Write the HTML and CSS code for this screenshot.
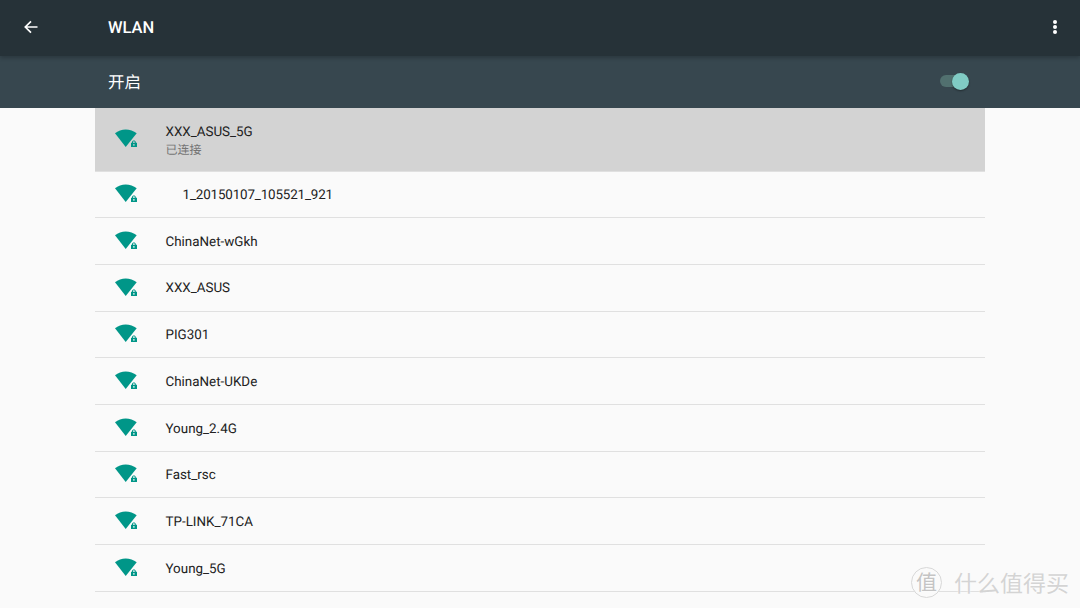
FILE: index.html
```html
<!DOCTYPE html>
<html lang="zh-CN">
<head>
    <meta charset="UTF-8" />
    <title>WLAN</title>
    <link rel="stylesheet" href="styles.css">
</head>
<body>
<svg class="defs" width="0" height="0">
    <symbol id="wifi" viewBox="0 0 24 20">
        <path d="M1 4.300C4 2 7.800 0.500 11.700 0.500C15.600 0.500 19.700 2 22.700 4.300L11.700 18.100Z" fill="#009688" />
        <path d="M18 13.700V13C18 12 18.900 11.400 19.900 11.400C20.900 11.400 21.800 12 21.800 13V13.700H23V18.100H17V13.700ZM19 13.700H20.800V13C20.800 12.500 20.400 12.200 19.900 12.200C19.400 12.200 19 12.500 19 13ZM19.900 15.100A0.800 0.800 0 1 0 19.910 16.700A0.800 0.800 0 1 0 19.900 15.100Z" fill="#009688" fill-rule="evenodd" />
    </symbol>
</svg>

<header class="toolbar">
    <svg class="back" width="16" height="16" viewBox="0 0 16 16">
        <path d="M14.500 8H2.500M8 2.300L2.300 8L8 13.700" fill="none" stroke="#fff" stroke-width="1.700" />
    </svg>
    <div class="title">WLAN</div>
    <div class="more"><span></span><span></span><span></span></div>
</header>

<div class="switch-bar">
    <div class="switch-label">开启</div>
    <div class="switch">
        <div class="track"></div>
        <div class="thumb"></div>
    </div>
</div>

<ul class="wifi-list">
    <li class="active">
        <svg class="wifi-icon"><use href="#wifi" /></svg>
        <div>
            <div class="name">XXX_ASUS_5G</div>
            <div class="status">已连接</div>
        </div>
    </li>
    <li><svg class="wifi-icon"><use href="#wifi" /></svg><div class="name indent">1_20150107_105521_921</div></li>
    <li><svg class="wifi-icon"><use href="#wifi" /></svg><div class="name">ChinaNet-wGkh</div></li>
    <li><svg class="wifi-icon"><use href="#wifi" /></svg><div class="name">XXX_ASUS</div></li>
    <li><svg class="wifi-icon"><use href="#wifi" /></svg><div class="name">PIG301</div></li>
    <li><svg class="wifi-icon"><use href="#wifi" /></svg><div class="name">ChinaNet-UKDe</div></li>
    <li><svg class="wifi-icon"><use href="#wifi" /></svg><div class="name">Young_2.4G</div></li>
    <li><svg class="wifi-icon"><use href="#wifi" /></svg><div class="name">Fast_rsc</div></li>
    <li><svg class="wifi-icon"><use href="#wifi" /></svg><div class="name">TP-LINK_71CA</div></li>
    <li><svg class="wifi-icon"><use href="#wifi" /></svg><div class="name">Young_5G</div></li>
</ul>

<!-- 水印 -->
<div class="watermark">
    <div class="stamp">值</div>
    <div class="stamp-text">什么值得买</div>
</div>
</body>
</html>
```

FILE: styles.css
```css
* {
    margin: 0;
    padding: 0;
    box-sizing: border-box;
}

html, body {
    width: 100%;
    height: 100%;
    overflow: hidden;
}

body {
    background: #fafafa;
    font-family: Roboto, "Noto Sans CJK SC", sans-serif;
    text-rendering: geometricPrecision;
}

.defs {
    position: absolute;
}

.toolbar {
    display: flex;
    align-items: center;
    height: 56px;
    padding: 0 23px 2px 23px;
    background: #263238;
    color: #fff;
    position: relative;
    z-index: 2;
    box-shadow: 0 2px 4px rgba(0, 0, 0, 0.22);
}

.back {
    flex-shrink: 0;
}

.title {
    flex: 1;
    margin-left: 69px;
    padding-top: 2px;
    font-size: 16.500px;
    font-weight: 500;
}

.more {
    display: flex;
    flex-direction: column;
    gap: 1px;
}

.more span {
    width: 4px;
    height: 4px;
    border-radius: 50%;
    background: #fff;
    display: block;
}

.switch-bar {
    display: flex;
    align-items: center;
    justify-content: space-between;
    height: 52px;
    padding: 0 111px 2px 108px;
    background: #37474f;
    color: #fff;
}

.switch-label {
    font-size: 16.500px;
}

.switch {
    position: relative;
    width: 29px;
    height: 17px;
}

.track {
    position: absolute;
    left: 0;
    top: 2px;
    width: 26px;
    height: 12px;
    border-radius: 6px;
    background: #51706f;
}

.thumb {
    position: absolute;
    right: 0;
    top: 0;
    width: 17px;
    height: 17px;
    border-radius: 50%;
    background: #80cbc4;
    box-shadow: 0 1px 2px rgba(0, 0, 0, 0.4);
}

.wifi-list {
    list-style: none;
    margin: 0 95px;
}

.wifi-list li {
    display: flex;
    align-items: center;
    height: 46.700px;
    padding: 2px 0 0 19px;
    border-bottom: 1px solid #e0e0e0;
}

.wifi-list li.active {
    height: 63.500px;
    padding-top: 4px;
    background: #d3d3d3;
}

.wifi-icon {
    width: 24px;
    height: 20px;
    margin: 0 27.500px 2px 0;
    flex-shrink: 0;
}

.active .wifi-icon {
    margin-bottom: 4px;
}

.name {
    font-size: 13.400px;
    line-height: 17px;
    padding-top: 0.500px;
    color: #212121;
}

.indent {
    padding-left: 17px;
    letter-spacing: -0.150px;
}

.status {
    font-size: 12px;
    line-height: 17px;
    margin-top: 1.500px;
    color: #757575;
}

.watermark {
    position: absolute;
    left: 911px;
    top: 567px;
    display: flex;
    align-items: center;
    gap: 12px;
    color: #d4d4d4;
    font-family: "Noto Sans CJK SC", sans-serif;
    text-shadow: 0 0 2px #fff;
}

.stamp {
    width: 31px;
    height: 31px;
    line-height: 28px;
    text-align: center;
    border: 1px solid #d8d8d8;
    border-radius: 50%;
    background: #fafafa;
    color: #c4c4c4;
    font-size: 21px;
}

.stamp-text {
    font-size: 23px;
    line-height: 31px;
}
```
